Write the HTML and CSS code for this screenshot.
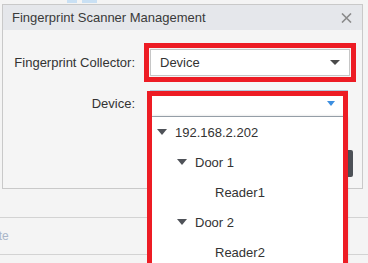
FILE: index.html
```html
<!DOCTYPE html>
<html lang="en">
  <head>
    <meta charset="UTF-8" />
    <title>Fingerprint Scanner Management</title>
    <link rel="stylesheet" href="styles.css">
  </head>
  <body>
    <div class="page">
      <div class="backdrop">
        <div class="top-strip">
          <span class="tab tab-a"></span>
          <span class="tab tab-b"></span>
        </div>
        <div class="spacer"></div>
        <div class="toolbar">
          <span class="link">Delete</span>
        </div>
      </div>

      <div class="dialog">
        <div class="dialog-title">
          <span>Fingerprint Scanner Management</span>
          <svg class="close" width="11" height="10" viewBox="0 0 11 10">
            <path d="M1 0.5 L10 9.5 M10 0.5 L1 9.5" stroke="#8a8a8a" stroke-width="1.6" fill="none" />
          </svg>
        </div>
        <div class="dialog-body">
          <label class="label">Fingerprint Collector:</label>
          <div class="select">
            <span>Device</span>
            <span class="caret"></span>
          </div>
          <label class="label">Device:</label>
          <div class="select select-open">
            <span></span>
            <span class="caret caret-blue"></span>
          </div>
        </div>
        <div class="dialog-footer">
          <button class="btn">OK</button>
        </div>
      </div>

      <ul class="dropdown">
        <li class="item level-0"><span class="tri"></span>192.168.2.202</li>
        <li class="item level-1"><span class="tri"></span>Door 1</li>
        <li class="item level-2">Reader1</li>
        <li class="item level-1"><span class="tri"></span>Door 2</li>
        <li class="item level-2">Reader2</li>
      </ul>

      <div class="mark mark-collector"></div>
      <div class="mark mark-device"></div>
    </div>
  </body>
</html>
```

FILE: styles.css
```css
body {
  margin: 0;
  font-family: "Liberation Sans", Arial, sans-serif;
  font-size: 13px;
  color: #333;
  background-color: #f4f4f4;
}

.page {
  position: relative;
  width: 368px;
  height: 263px;
  overflow: hidden;
}

.backdrop {
  display: flex;
  flex-direction: column;
}

.top-strip {
  display: flex;
  gap: 5px;
  height: 4px;
  padding-left: 67px;
}

.tab {
  height: 3px;
  background-color: #c9e0f4;
}

.tab-a {
  width: 10px;
}

.tab-b {
  width: 15px;
}

.spacer {
  height: 213px;
}

.toolbar {
  height: 36px;
  border-top: 1px solid #d3d3d3;
  border-bottom: 1px solid #d3d3d3;
  display: flex;
  align-items: center;
}

.link {
  margin-left: -26px;
  color: #a9b6c9;
  font-size: 12px;
}

.dialog {
  position: absolute;
  left: 2px;
  top: 4px;
  width: 359px;
  height: 183px;
  border: 1px solid #c9c9c9;
  background-color: #f5f5f5;
}

.dialog-title {
  height: 25px;
  padding: 0 10px 0 9px;
  display: flex;
  align-items: center;
  justify-content: space-between;
  background-color: #e5e7eb;
  color: #3a3a3a;
}

.dialog-body {
  display: grid;
  grid-template-columns: 132px 200px;
  column-gap: 15px;
  row-gap: 14px;
  align-items: center;
  padding-top: 19px;
}

.label {
  text-align: right;
}

.select {
  height: 25px;
  padding: 0 9px;
  display: flex;
  align-items: center;
  justify-content: space-between;
  background-color: #fff;
  border: 1px solid #c6c6c6;
}

.select-open {
  width: 178px;
  border-color: #b3c7da;
  border-bottom-color: #a9b3bd;
}

.caret {
  width: 0;
  height: 0;
  border-left: 5px solid transparent;
  border-right: 5px solid transparent;
  border-top: 5px solid #4a4a4a;
}

.caret-blue {
  border-left-width: 4px;
  border-right-width: 4px;
  border-top-color: #3d8fe0;
  margin-right: 3px;
}

.dialog-footer {
  display: flex;
  justify-content: flex-end;
  padding: 33px 9px 0 0;
}

.btn {
  width: 60px;
  height: 27px;
  border: none;
  border-radius: 2px;
  background-color: #4d5157;
  color: #fff;
}

.dropdown {
  position: absolute;
  left: 150px;
  top: 117px;
  width: 195px;
  height: 160px;
  margin: 0;
  padding: 0;
  list-style: none;
  background-color: #fff;
  box-shadow: 2px 0 3px rgba(0, 0, 0, 0.3);
}

.item {
  height: 30px;
  display: flex;
  align-items: center;
  gap: 8px;
}

.level-0 {
  padding-left: 7px;
}

.level-1 {
  padding-left: 27px;
}

.level-2 {
  padding-left: 65px;
}

.tri {
  width: 0;
  height: 0;
  border-left: 5px solid transparent;
  border-right: 5px solid transparent;
  border-top: 6px solid #4f5258;
}

.mark {
  position: absolute;
  border: 5px solid #ed1c24;
}

.mark-collector {
  left: 144px;
  top: 43px;
  width: 202px;
  height: 29px;
}

.mark-device {
  left: 147px;
  top: 91px;
  width: 191px;
  height: 170px;
}
```
